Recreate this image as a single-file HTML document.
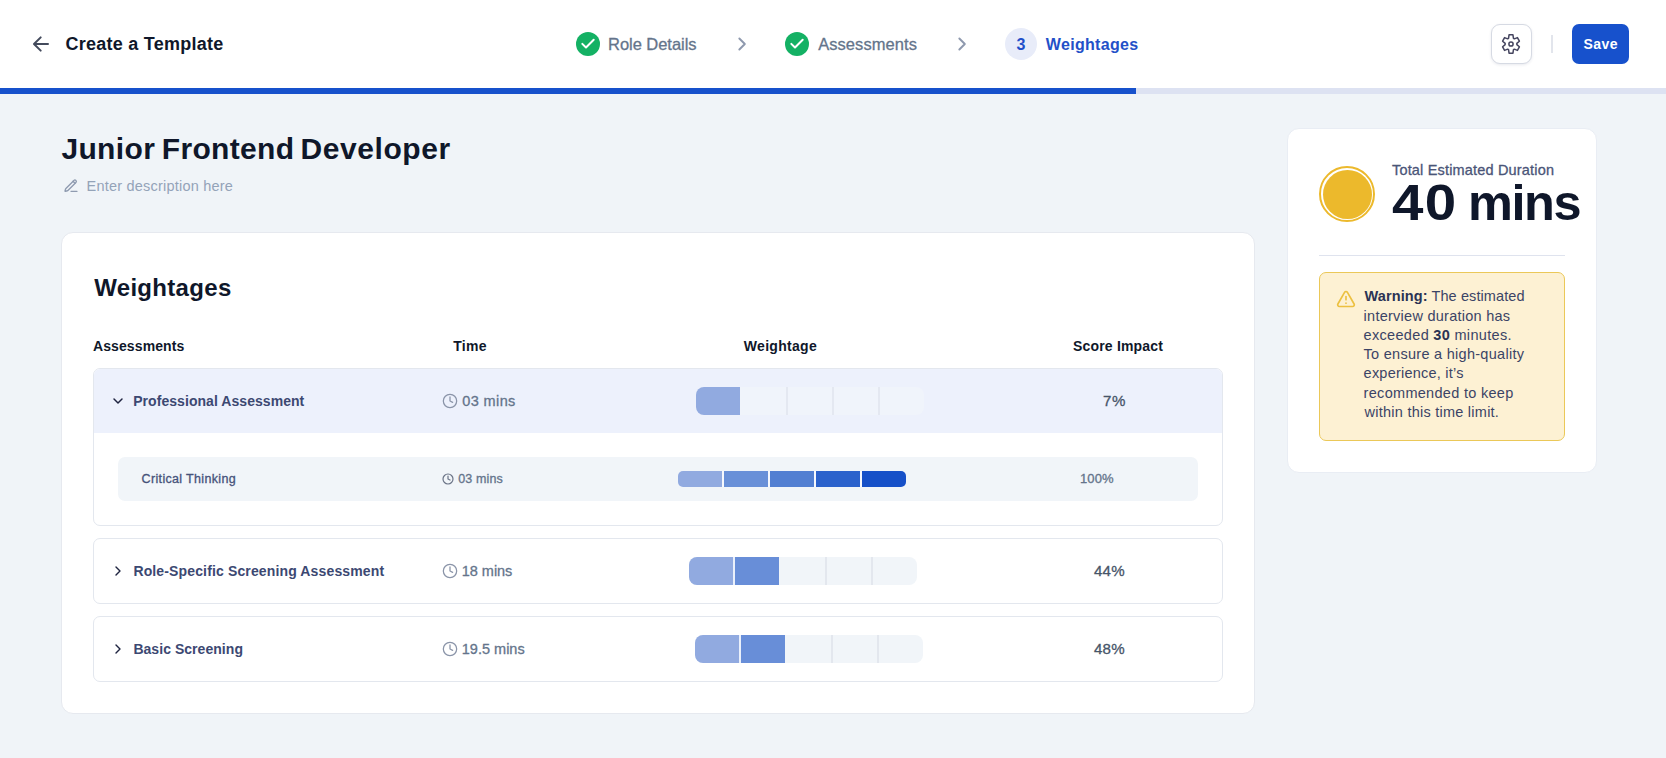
<!DOCTYPE html>
<html lang="en">
<head>
<meta charset="utf-8">
<title>Create a Template</title>
<style>
*{box-sizing:border-box;margin:0;padding:0}
html,body{width:1666px;height:758px;overflow:hidden}
body{background:#f0f4f8;font-family:"Liberation Sans",Arial,sans-serif;position:relative;-webkit-font-smoothing:antialiased}
.a{position:absolute}
.t{position:absolute;white-space:nowrap}
.t b{font-weight:700;color:#2b3354}
svg{position:absolute;overflow:visible}
.ic{fill:none;stroke-linecap:round;stroke-linejoin:round}
#header{left:0;top:0;width:1666px;height:88px;background:#fff}
#track{left:0;top:88px;width:1666px;height:6px;background:#dde2f2}
#prog{left:0;top:88px;width:1136px;height:6px;background:#1751cc}
.gc{width:24px;height:24px;border-radius:50%;background:#14b164;top:32px}
#c3{left:1005px;top:28px;width:32px;height:32px;border-radius:50%;background:#e8ecf9}
#gear{left:1490.5px;top:24px;width:41px;height:40px;border:1px solid #d6dae3;border-radius:9px;background:#fff;box-shadow:0 1px 3px rgba(30,40,90,.10)}
#sep{left:1551.3px;top:35px;width:1.4px;height:18px;background:#e2e5ec}
#savebtn{left:1572px;top:24px;width:57px;height:40px;border-radius:7px;background:#1751cc}
#card{left:61px;top:232px;width:1194px;height:482px;background:#fff;border:1px solid #e6e9ef;border-radius:12px}
#side{left:1287px;top:128px;width:310px;height:344.5px;background:#fff;border:1px solid #e9edf4;border-radius:12px}
.row{left:93px;width:1130px;border:1px solid #e3e7ee;border-radius:7px;background:#fff;overflow:hidden}
#row1{top:368px;height:158px}
#row1h{left:0;top:0;width:1130px;height:64px;background:#edf1fc}
#row2{top:538px;height:66px}
#row3{top:616px;height:66px}
#subrow{left:118px;top:457px;width:1080px;height:44px;background:#f1f5f9;border-radius:7px}
.bar{height:28px;width:228px;border-radius:8px;overflow:hidden;background:#f1f5f9}
.bar i{position:absolute;top:0;height:100%;display:block}
#sbar{left:678px;top:471px;width:228px;height:16px;border-radius:5px;overflow:hidden;background:#f6f8fd}
#sbar i{position:absolute;top:0;height:100%;width:44px}
#sun1{left:1319px;top:166px;width:56px;height:56px;border-radius:50%;border:2px solid #ecb92c;background:#fff}
#sun2{left:1322.5px;top:169.5px;width:49px;height:49px;border-radius:50%;background:#ecb92c}
#hr{left:1319px;top:254.8px;width:246px;height:1px;background:#dfe3ee}
#warn{left:1319px;top:272px;width:246px;height:169px;border:1px solid #ebc858;border-radius:7px;background:#fdf1d3}
</style>
</head>
<body>
<div class="a" id="header"></div>
<div class="a" id="track"></div>
<div class="a" id="prog"></div>

<!-- back arrow -->
<svg class="ic" style="left:30px;top:34px" width="20" height="20" viewBox="0 0 20 20" stroke="#434a5c" stroke-width="2"><path d="M10.7 3.4 L4 10 L10.7 16.6 M4.2 10 H18"/></svg>

<!-- stepper -->
<div class="a gc" style="left:576px"></div>
<svg class="ic" style="left:576px;top:32px" width="24" height="24" viewBox="0 0 24 24" stroke="#fff" stroke-width="2"><path d="M6.3 11.9 L10 15.5 L17.7 7.7"/></svg>
<svg class="ic" style="left:731.5px;top:34px" width="20" height="20" viewBox="0 0 24 24" stroke="#8e99ae" stroke-width="2.3"><path d="m8.8 18.6 6.6-6.6-6.6-6.6"/></svg>
<div class="a gc" style="left:785px"></div>
<svg class="ic" style="left:785px;top:32px" width="24" height="24" viewBox="0 0 24 24" stroke="#fff" stroke-width="2"><path d="M6.3 11.9 L10 15.5 L17.7 7.7"/></svg>
<svg class="ic" style="left:951.5px;top:34px" width="20" height="20" viewBox="0 0 24 24" stroke="#8e99ae" stroke-width="2.3"><path d="m8.8 18.6 6.6-6.6-6.6-6.6"/></svg>
<div class="a" id="c3"></div>

<!-- header actions -->
<div class="a" id="gear"></div>
<svg class="ic" style="left:1499px;top:32px" width="24" height="24" viewBox="-12 -12 24 24" stroke="#45455f" stroke-width="1.5"><path d="M-2.46 -5.72L-1.95 -9.20L1.95 -9.20L2.46 -5.72A5.86 6.30 0 0 1 3.37 -5.15L6.43 -6.42L8.39 -2.78L5.84 -0.56A5.86 6.30 0 0 1 5.84 0.56L8.39 2.78L6.43 6.42L3.37 5.15A5.86 6.30 0 0 1 2.46 5.72L1.95 9.20L-1.95 9.20L-2.46 5.72A5.86 6.30 0 0 1 -3.37 5.15L-6.43 6.42L-8.39 2.78L-5.84 0.56A5.86 6.30 0 0 1 -5.84 -0.56L-8.39 -2.78L-6.43 -6.42L-3.37 -5.15A5.86 6.30 0 0 1 -2.46 -5.72Z"/><circle cx="0" cy="0" r="2.1"/></svg>
<div class="a" id="sep"></div>
<div class="a" id="savebtn"></div>

<!-- description pencil -->
<svg class="ic" style="left:62.8px;top:178.2px" width="16" height="16" viewBox="0 0 24 24" stroke="#8f9bb0" stroke-width="2"><path d="M12 20h9"/><path d="m15 5 3 3"/><path d="M16.376 3.622a1 1 0 0 1 3.002 3.002L7.368 18.635a2 2 0 0 1-.855.506l-2.872.838a.5.5 0 0 1-.62-.62l.838-2.872a2 2 0 0 1 .506-.854z"/></svg>

<!-- main card -->
<div class="a" id="card"></div>
<div class="a row" id="row1"><div class="a" id="row1h"></div></div>
<div class="a" id="subrow"></div>
<div class="a row" id="row2"></div>
<div class="a row" id="row3"></div>

<!-- chevrons in rows -->
<svg class="ic" style="left:110px;top:393px" width="16" height="16" viewBox="0 0 24 24" stroke="#1f2440" stroke-width="2.2"><path d="m6 9 6 6 6-6"/></svg>
<svg class="ic" style="left:110.2px;top:562.8px" width="16" height="16" viewBox="0 0 24 24" stroke="#1f2440" stroke-width="2.1"><path d="m9 18.1 6-6.1-6-6.1"/></svg>
<svg class="ic" style="left:110.2px;top:640.8px" width="16" height="16" viewBox="0 0 24 24" stroke="#1f2440" stroke-width="2.1"><path d="m9 18.1 6-6.1-6-6.1"/></svg>

<!-- clocks -->
<svg class="ic" style="left:442px;top:392.8px" width="16" height="16" viewBox="0 0 24 24" stroke="#8a94a8" stroke-width="1.9"><circle cx="12" cy="12" r="10"/><path d="M12 6v6l4 2"/></svg>
<svg class="ic" style="left:441.9px;top:472.9px" width="12" height="12" viewBox="0 0 24 24" stroke="#6b7487" stroke-width="2.4"><circle cx="12" cy="12" r="10"/><path d="M12 6v6l4 2"/></svg>
<svg class="ic" style="left:442px;top:562.9px" width="16" height="16" viewBox="0 0 24 24" stroke="#8a94a8" stroke-width="1.9"><circle cx="12" cy="12" r="10"/><path d="M12 6v6l4 2"/></svg>
<svg class="ic" style="left:442px;top:641px" width="16" height="16" viewBox="0 0 24 24" stroke="#8a94a8" stroke-width="1.9"><circle cx="12" cy="12" r="10"/><path d="M12 6v6l4 2"/></svg>

<!-- weightage bars -->
<div class="a bar" style="left:696px;top:387px;background:#f0f4fb">
  <i style="left:0;width:44px;background:#91aae0"></i>
  <i style="left:90px;width:2px;background:#e4e8f1"></i><i style="left:136px;width:2px;background:#e4e8f1"></i><i style="left:182px;width:2px;background:#e4e8f1"></i>
</div>
<div class="a" id="sbar">
  <i style="left:0;background:#91aae0"></i><i style="left:46px;background:#6990d8"></i><i style="left:92px;background:#527fd2"></i><i style="left:138px;background:#2b62cc"></i><i style="left:184px;background:#1650c8"></i>
</div>
<div class="a bar" style="left:689px;top:557px">
  <i style="left:0;width:44px;background:#91aae0"></i><i style="left:44px;width:2px;background:#eaf0fb"></i><i style="left:46px;width:44px;background:#688ed8"></i>
  <i style="left:136px;width:2px;background:#e3e7ee"></i><i style="left:182px;width:2px;background:#e3e7ee"></i>
</div>
<div class="a bar" style="left:695px;top:635px">
  <i style="left:0;width:44px;background:#91aae0"></i><i style="left:44px;width:2px;background:#eaf0fb"></i><i style="left:46px;width:44px;background:#688ed8"></i>
  <i style="left:136px;width:2px;background:#e3e7ee"></i><i style="left:182px;width:2px;background:#e3e7ee"></i>
</div>

<!-- side card -->
<div class="a" id="side"></div>
<div class="a" id="sun1"></div>
<div class="a" id="sun2"></div>
<div class="a" id="hr"></div>
<div class="a" id="warn"></div>
<svg class="ic" style="left:1336px;top:289px" width="20" height="20" viewBox="0 0 24 24" stroke="#ecc040" stroke-width="2"><path d="m21.73 18-8-14a2 2 0 0 0-3.48 0l-8 14A2 2 0 0 0 4 21h16a2 2 0 0 0 1.73-3"/><path d="M12 9v4"/><path d="M12 17h.01"/></svg>

<div class="t" id="hdr" style="left:65.40px;top:34.66px;font-size:18.0px;line-height:18.0px;font-weight:700;color:#0f172a;letter-spacing:0.263px;">Create a Template</div>
<div class="t" id="s1" style="left:608.00px;top:36.03px;font-size:16.5px;line-height:16.5px;font-weight:400;color:#64748b;letter-spacing:-0.036px;-webkit-text-stroke:0.3px currentColor;">Role Details</div>
<div class="t" id="s2" style="left:818.20px;top:36.03px;font-size:16.5px;line-height:16.5px;font-weight:400;color:#64748b;letter-spacing:0.060px;-webkit-text-stroke:0.3px currentColor;">Assessments</div>
<div class="t" id="s3n" style="left:1016.40px;top:37.16px;font-size:16.0px;line-height:16.0px;font-weight:700;color:#1f4fc9;letter-spacing:0.000px;">3</div>
<div class="t" id="s3" style="left:1045.80px;top:37.06px;font-size:16.0px;line-height:16.0px;font-weight:700;color:#2350c8;letter-spacing:0.311px;">Weightages</div>
<div class="t" id="save" style="left:1583.60px;top:37.15px;font-size:14.0px;line-height:14.0px;font-weight:700;color:#ffffff;letter-spacing:0.400px;">Save</div>
<div class="t" id="title" style="left:61.40px;top:133.80px;font-size:30.0px;line-height:30.0px;font-weight:700;color:#0f172a;letter-spacing:0.360px;">Junior</div>
<div class="t" id="title2" style="left:161.80px;top:133.80px;font-size:30.0px;line-height:30.0px;font-weight:700;color:#0f172a;letter-spacing:0.314px;">Frontend</div>
<div class="t" id="title3" style="left:300.60px;top:133.80px;font-size:30.0px;line-height:30.0px;font-weight:700;color:#0f172a;letter-spacing:0.550px;">Developer</div>
<div class="t" id="desc" style="left:86.60px;top:179.03px;font-size:14.5px;line-height:14.5px;font-weight:400;color:#94a3b8;letter-spacing:0.210px;">Enter description here</div>
<div class="t" id="h2" style="left:94.20px;top:275.68px;font-size:24.0px;line-height:24.0px;font-weight:700;color:#0f172a;letter-spacing:0.311px;">Weightages</div>
<div class="t" id="th1" style="left:93.00px;top:339.25px;font-size:14.0px;line-height:14.0px;font-weight:700;color:#0f172a;letter-spacing:0.100px;">Assessments</div>
<div class="t" id="th2" style="left:453.20px;top:339.25px;font-size:14.0px;line-height:14.0px;font-weight:700;color:#0f172a;letter-spacing:0.333px;">Time</div>
<div class="t" id="th3" style="left:743.80px;top:339.25px;font-size:14.0px;line-height:14.0px;font-weight:700;color:#0f172a;letter-spacing:0.300px;">Weightage</div>
<div class="t" id="th4" style="left:1073.00px;top:339.25px;font-size:14.0px;line-height:14.0px;font-weight:700;color:#0f172a;letter-spacing:0.182px;">Score Impact</div>
<div class="t" id="r1" style="left:133.20px;top:393.95px;font-size:14.0px;line-height:14.0px;font-weight:700;color:#3c4872;letter-spacing:0.055px;">Professional Assessment</div>
<div class="t" id="r1t" style="left:462.20px;top:393.53px;font-size:14.5px;line-height:14.5px;font-weight:400;color:#64748b;letter-spacing:0.400px;-webkit-text-stroke:0.3px currentColor;">03 mins</div>
<div class="t" id="r1p" style="left:1103.00px;top:393.53px;font-size:14.5px;line-height:14.5px;font-weight:400;color:#475569;letter-spacing:0.577px;transform:scaleX(1.04);transform-origin:0 0;-webkit-text-stroke:0.3px currentColor;">7%</div>
<div class="t" id="sub" style="left:141.60px;top:473.42px;font-size:12.5px;line-height:12.5px;font-weight:400;color:#46527a;letter-spacing:0.337px;-webkit-text-stroke:0.3px currentColor;">Critical Thinking</div>
<div class="t" id="subt" style="left:458.20px;top:473.42px;font-size:12.5px;line-height:12.5px;font-weight:400;color:#64748b;letter-spacing:0.133px;-webkit-text-stroke:0.3px currentColor;">03 mins</div>
<div class="t" id="subp" style="left:1080.00px;top:473.42px;font-size:12.5px;line-height:12.5px;font-weight:400;color:#64748b;letter-spacing:0.128px;transform:scaleX(1.04);transform-origin:0 0;-webkit-text-stroke:0.3px currentColor;">100%</div>
<div class="t" id="r2" style="left:133.40px;top:563.95px;font-size:14.0px;line-height:14.0px;font-weight:700;color:#3c4872;letter-spacing:0.139px;">Role-Specific Screening Assessment</div>
<div class="t" id="r2t" style="left:461.80px;top:563.53px;font-size:14.5px;line-height:14.5px;font-weight:400;color:#64748b;letter-spacing:-0.033px;-webkit-text-stroke:0.3px currentColor;">18 mins</div>
<div class="t" id="r2p" style="left:1094.20px;top:563.53px;font-size:14.5px;line-height:14.5px;font-weight:400;color:#475569;letter-spacing:0.192px;transform:scaleX(1.04);transform-origin:0 0;-webkit-text-stroke:0.3px currentColor;">44%</div>
<div class="t" id="r3" style="left:133.40px;top:641.95px;font-size:14.0px;line-height:14.0px;font-weight:700;color:#3c4872;letter-spacing:0.043px;">Basic Screening</div>
<div class="t" id="r3t" style="left:461.80px;top:641.53px;font-size:14.5px;line-height:14.5px;font-weight:400;color:#64748b;letter-spacing:0.000px;-webkit-text-stroke:0.3px currentColor;">19.5 mins</div>
<div class="t" id="r3p" style="left:1094.20px;top:641.53px;font-size:14.5px;line-height:14.5px;font-weight:400;color:#475569;letter-spacing:0.192px;transform:scaleX(1.04);transform-origin:0 0;-webkit-text-stroke:0.3px currentColor;">48%</div>
<div class="t" id="ted" style="left:1392.00px;top:162.63px;font-size:14.5px;line-height:14.5px;font-weight:400;color:#4a5578;letter-spacing:0.174px;-webkit-text-stroke:0.3px currentColor;">Total Estimated Duration</div>
<div class="t" id="big" style="left:1391.60px;top:178.27px;font-size:50.0px;line-height:50.0px;font-weight:700;color:#0f172a;letter-spacing:1.239px;transform:scaleX(1.13);transform-origin:0 0;">40</div>
<div class="t" id="big2" style="left:1468.00px;top:178.27px;font-size:50.0px;line-height:50.0px;font-weight:700;color:#0f172a;letter-spacing:-1.452px;transform:scaleX(1.01);transform-origin:0 0;">mins</div>
<div class="t" id="w0" style="left:1364.60px;top:288.73px;font-size:14.5px;line-height:14.5px;font-weight:400;color:#3b4466;letter-spacing:0.095px;"><b>Warning:</b> The estimated</div>
<div class="t" id="w1" style="left:1363.60px;top:309.03px;font-size:14.5px;line-height:14.5px;font-weight:400;color:#3b4466;letter-spacing:0.257px;">interview duration has</div>
<div class="t" id="w2" style="left:1363.60px;top:328.33px;font-size:14.5px;line-height:14.5px;font-weight:400;color:#3b4466;letter-spacing:0.316px;">exceeded <b>30</b> minutes.</div>
<div class="t" id="w3" style="left:1363.60px;top:346.63px;font-size:14.5px;line-height:14.5px;font-weight:400;color:#3b4466;letter-spacing:0.278px;">To ensure a high-quality</div>
<div class="t" id="w4" style="left:1363.60px;top:365.93px;font-size:14.5px;line-height:14.5px;font-weight:400;color:#3b4466;letter-spacing:0.227px;">experience, it’s</div>
<div class="t" id="w5" style="left:1363.60px;top:386.23px;font-size:14.5px;line-height:14.5px;font-weight:400;color:#3b4466;letter-spacing:0.300px;">recommended to keep</div>
<div class="t" id="w6" style="left:1364.60px;top:404.53px;font-size:14.5px;line-height:14.5px;font-weight:400;color:#3b4466;letter-spacing:0.245px;">within this time limit.</div>

</body>
</html>
